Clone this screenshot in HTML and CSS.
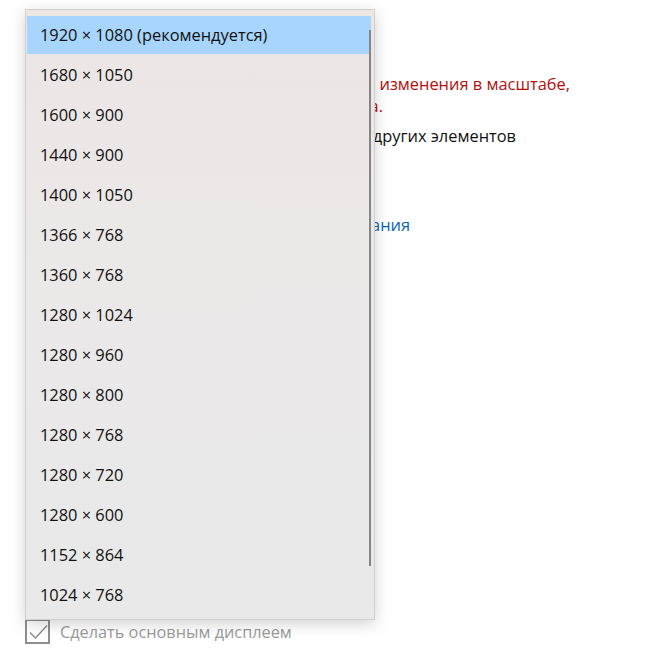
FILE: index.html
```html
<!DOCTYPE html>
<html lang="ru">
<head>
<meta charset="utf-8">
<link rel="stylesheet" href="styles.css">
</head>
<body>
<div class="page">
  <div class="content">
    <div class="warn">
      <p class="row line1"><span>Приложения могут не реагировать на изменения в масштабе,</span></p>
      <p class="row line2"><span>до перезапуска компьютера.</span></p>
    </div>
    <p class="row plain"><span>Изменение размера текста, приложений и других элементов</span></p>
    <p class="row link"><span>Другие параметры масштабирования</span></p>
  </div>
  <label class="check">
    <span class="box"><svg viewBox="0 0 24 24" width="24" height="24"><path d="M4 12.5 L9.5 18 L21 5.5" fill="none" stroke="#8a8a8a" stroke-width="1.4"/></svg></span>
    <span class="check-label">Сделать основным дисплеем</span>
  </label>
</div>
<div class="menu">
  <div class="scroll"></div>
  <ul class="list">
    <li class="item active">1920 × 1080 (рекомендуется)</li>
    <li class="item">1680 × 1050</li>
    <li class="item">1600 × 900</li>
    <li class="item">1440 × 900</li>
    <li class="item">1400 × 1050</li>
    <li class="item">1366 × 768</li>
    <li class="item">1360 × 768</li>
    <li class="item">1280 × 1024</li>
    <li class="item">1280 × 960</li>
    <li class="item">1280 × 800</li>
    <li class="item">1280 × 768</li>
    <li class="item">1280 × 720</li>
    <li class="item">1280 × 600</li>
    <li class="item">1152 × 864</li>
    <li class="item">1024 × 768</li>
  </ul>
</div>
</body>
</html>
```
FILE: styles.css
```css
html, body {
  margin: 0;
  padding: 0;
  background: #ffffff;
  width: 659px;
  height: 656px;
  overflow: hidden;
  font-family: "Open Sans", "Noto Sans", sans-serif;
}
.page {
  position: relative;
  width: 659px;
  height: 656px;
  display: flex;
  flex-direction: column;
  justify-content: space-between;
}
.content {
  padding: 73px 0 0 25px;
}
.row {
  margin: 0;
  font-size: 16.4px;
  white-space: nowrap;
  display: flex;
  justify-content: flex-end;
}
.row span { flex: none; }
.warn {
  color: #b40e0e;
}
.line1, .line2 { line-height: 22px; }
.line1 { width: 545px; }
.line2 { width: 358px; }
.plain {
  color: #111;
  margin-top: 9px;
  line-height: 20px;
  width: 491px;
}
.link {
  color: #0a66b4;
  margin-top: 69px;
  line-height: 20px;
  width: 385px;
}
.check {
  display: flex;
  align-items: center;
  gap: 10px;
  padding: 0 0 12px 25px;
}
.box {
  width: 21px;
  height: 21px;
  border: 2px solid #8e8e8e;
  display: flex;
  align-items: center;
  justify-content: center;
  overflow: hidden;
}
.box svg { flex: none; }
.check-label {
  color: #9a9a9a;
  font-size: 16.3px;
}
.menu {
  position: absolute;
  left: 25px;
  top: 9px;
  width: 348px;
  height: 609px;
  border: 1px solid #d0cfcf;
  background: linear-gradient(180deg, #ece6e5 0%, #ebe8e8 35%, #e9e9e9 100%);
  box-shadow: 0 4px 14px rgba(0,0,0,0.18);
}
.list {
  list-style: none;
  margin: 0;
  padding: 5px 3px 0 1px;
}
.item {
  height: 40px;
  line-height: 40px;
  padding-left: 13px;
  font-size: 16.4px;
  color: #111;
}
.item.active {
  background: linear-gradient(#a7d5fb, #a7d5fb) 0 1px / 100% 38px no-repeat;
}
.scroll {
  position: absolute;
  right: 3px;
  top: 20px;
  width: 2px;
  height: 536px;
  background: #858585;
  z-index: 1;
}
```
